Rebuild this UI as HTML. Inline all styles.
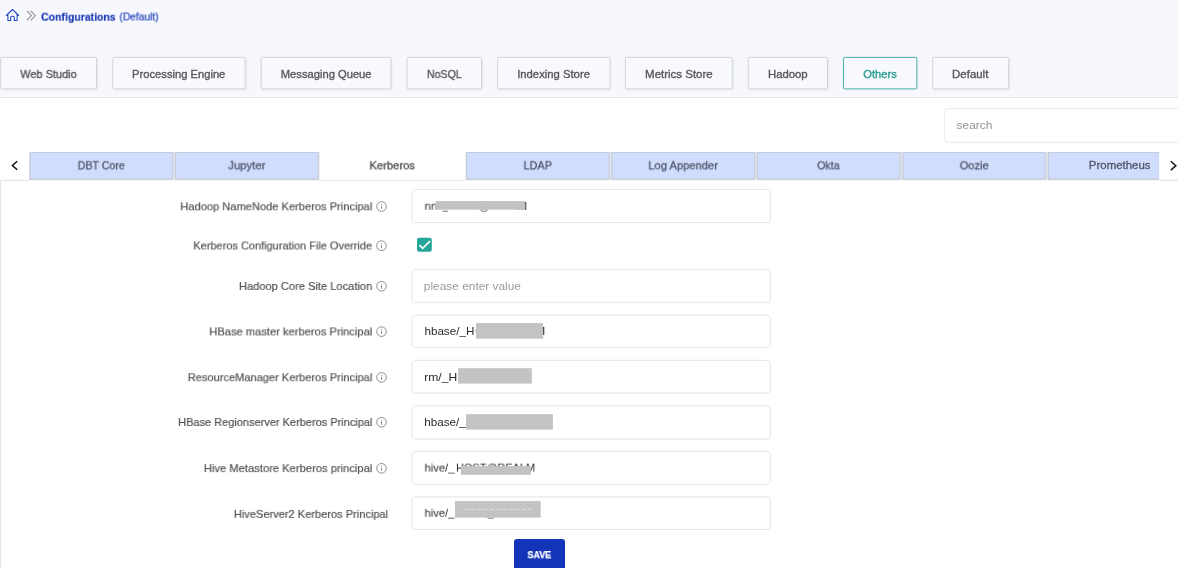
<!DOCTYPE html>
<html><head><meta charset="utf-8"><style>
*{box-sizing:border-box;margin:0;padding:0}
html,body{width:1178px;height:568px;overflow:hidden;background:#fff;font-family:"Liberation Sans",sans-serif;}
body{position:relative}
.t{position:absolute;line-height:20px;white-space:nowrap;transform-origin:0 0;z-index:2;will-change:transform}
.t.z{z-index:6}
.hdr{position:absolute;left:0;top:0;width:1178px;height:97px;background:#f6f8fe}
.sh{position:absolute;top:57px;height:32px;box-shadow:1px 1px 2px rgba(0,0,0,.07)}
.bg,.fg{position:absolute;left:0;top:0}
.bg{z-index:1}.fg{z-index:4}
.mask{position:absolute;background:#c1c1c1;z-index:3}
.save{position:absolute;left:514px;top:539px;width:51px;height:40px;background:#1434b8;border-radius:3px;z-index:5}
</style></head><body>
<div class="hdr"></div>
<div class="sh" style="left:0.6px;width:96.4px"></div>
<div class="sh" style="left:112.8px;width:132.8px"></div>
<div class="sh" style="left:261.2px;width:130.2px"></div>
<div class="sh" style="left:407.1px;width:74.9px"></div>
<div class="sh" style="left:497.6px;width:112.8px"></div>
<div class="sh" style="left:625.4px;width:107.3px"></div>
<div class="sh" style="left:748.3px;width:79.7px"></div>
<div class="sh" style="left:932.7px;width:76.4px"></div>
<svg class="bg" width="1178" height="568" viewBox="0 0 1178 568"><rect x="0" y="97" width="1178" height="1.1" fill="#e3e5eb"/><rect x="0.6" y="57.4" width="95.9" height="31.5" rx="1" fill="#f7f9fe" stroke="#d3d4d8" stroke-width="1"/><rect x="112.8" y="57.4" width="132.3" height="31.5" rx="1" fill="#f7f9fe" stroke="#d3d4d8" stroke-width="1"/><rect x="261.2" y="57.4" width="129.7" height="31.5" rx="1" fill="#f7f9fe" stroke="#d3d4d8" stroke-width="1"/><rect x="407.1" y="57.4" width="74.4" height="31.5" rx="1" fill="#f7f9fe" stroke="#d3d4d8" stroke-width="1"/><rect x="497.6" y="57.4" width="112.3" height="31.5" rx="1" fill="#f7f9fe" stroke="#d3d4d8" stroke-width="1"/><rect x="625.4" y="57.4" width="106.8" height="31.5" rx="1" fill="#f7f9fe" stroke="#d3d4d8" stroke-width="1"/><rect x="748.3" y="57.4" width="79.2" height="31.5" rx="1" fill="#f7f9fe" stroke="#d3d4d8" stroke-width="1"/><rect x="843.4" y="57.4" width="73.5" height="31.5" rx="1" fill="#f7f9fe" stroke="#45ada1" stroke-width="1"/><rect x="932.7" y="57.4" width="75.9" height="31.5" rx="1" fill="#f7f9fe" stroke="#d3d4d8" stroke-width="1"/><rect x="944.3" y="108.5" width="260" height="33.8" rx="5" fill="#fff" stroke="#e9e9e9" stroke-width="1"/><rect x="29" y="152.3" width="1131" height="27" fill="#e2e3e8"/><rect x="30.0" y="152.5" width="142.8" height="26.6" fill="#d1ddfc" stroke="#c6cbdc" stroke-width="1"/><rect x="29.5" y="178.8" width="143.8" height="0.9" fill="#c2c5d1"/><rect x="175.6" y="152.5" width="142.7" height="26.6" fill="#d1ddfc" stroke="#c6cbdc" stroke-width="1"/><rect x="175.1" y="178.8" width="143.7" height="0.9" fill="#c2c5d1"/><rect x="319.5" y="151.5" width="146.0" height="29" fill="#fff"/><rect x="466.5" y="152.5" width="142.7" height="26.6" fill="#d1ddfc" stroke="#c6cbdc" stroke-width="1"/><rect x="466" y="178.8" width="143.7" height="0.9" fill="#c2c5d1"/><rect x="611.9" y="152.5" width="142.5" height="26.6" fill="#d1ddfc" stroke="#c6cbdc" stroke-width="1"/><rect x="611.4" y="178.8" width="143.5" height="0.9" fill="#c2c5d1"/><rect x="757.0" y="152.5" width="142.9" height="26.6" fill="#d1ddfc" stroke="#c6cbdc" stroke-width="1"/><rect x="756.5" y="178.8" width="143.9" height="0.9" fill="#c2c5d1"/><rect x="902.9" y="152.5" width="142.4" height="26.6" fill="#d1ddfc" stroke="#c6cbdc" stroke-width="1"/><rect x="902.4" y="178.8" width="143.4" height="0.9" fill="#c2c5d1"/><rect x="1048.4" y="152.5" width="146.1" height="26.6" fill="#d1ddfc" stroke="#c6cbdc" stroke-width="1"/><rect x="1047.9" y="178.8" width="147.1" height="0.9" fill="#c2c5d1"/><rect x="1159.2" y="150" width="20" height="30.5" fill="#fff"/><rect x="0.3" y="179.7" width="29.2" height="1.2" fill="#e6e6e6"/><rect x="29.5" y="179.9" width="1130" height="1.1" fill="#f4f4f4"/><rect x="1159.2" y="179.7" width="20" height="1.2" fill="#e6e6e6"/><rect x="319.5" y="179.8" width="146" height="1.1" fill="#e9e9e9"/><rect x="0" y="180.5" width="1.1" height="400" fill="#e6e6e6"/><rect x="412.1" y="189.5" width="358.3" height="33.0" rx="4" fill="#fff" stroke="#e9e9e9" stroke-width="1.2"/><rect x="412.1" y="269.4" width="358.3" height="33.0" rx="4" fill="#fff" stroke="#e9e9e9" stroke-width="1.2"/><rect x="412.1" y="315.2" width="358.3" height="32.5" rx="4" fill="#fff" stroke="#e9e9e9" stroke-width="1.2"/><rect x="412.1" y="360.4" width="358.3" height="32.8" rx="4" fill="#fff" stroke="#e9e9e9" stroke-width="1.2"/><rect x="412.1" y="405.8" width="358.3" height="33.3" rx="4" fill="#fff" stroke="#e9e9e9" stroke-width="1.2"/><rect x="412.1" y="451.3" width="358.3" height="33.0" rx="4" fill="#fff" stroke="#e9e9e9" stroke-width="1.2"/><rect x="412.1" y="496.8" width="358.3" height="32.7" rx="4" fill="#fff" stroke="#e9e9e9" stroke-width="1.2"/><rect x="417" y="237.7" width="14.8" height="14" rx="2" fill="#26a69a"/><path d="M419.4 245.2 L422.7 248.4 L429.9 241.1" fill="none" stroke="#fff" stroke-width="1.7"/></svg>
<svg class="fg" width="1178" height="568" viewBox="0 0 1178 568"><path d="M6.3 15.5 L12.5 9.5 L18.7 15.5 M7.9 14.2 V20.5 H10.7 V17.2 Q10.7 16.2 11.7 16.2 H13.3 Q14.3 16.2 14.3 17.2 V20.5 H17.1 V14.2" fill="none" stroke="#2647c4" stroke-width="1.05" stroke-linejoin="round" stroke-linecap="round"/><path d="M26.9 10.9 L31.4 15.6 L26.9 20.3 M30.6 10.9 L35.4 15.6 L30.6 20.3" fill="none" stroke="#8f8f8f" stroke-width="1.05"/><path d="M17.2 161.2 L12.4 165.5 L17.2 169.8" fill="none" stroke="#111" stroke-width="1.5"/><path d="M1170.8 161.3 L1175.8 165.7 L1170.8 170.1" fill="none" stroke="#111" stroke-width="1.5"/><circle cx="381.5" cy="206.5" r="4.8" fill="none" stroke="#808080" stroke-width="0.9"/><path d="M381.5 205.9 V209.0 M381.5 204.0 V204.9" stroke="#808080" stroke-width="0.9"/><circle cx="381.5" cy="245.7" r="4.8" fill="none" stroke="#808080" stroke-width="0.9"/><path d="M381.5 245.1 V248.2 M381.5 243.2 V244.1" stroke="#808080" stroke-width="0.9"/><circle cx="381.5" cy="286.2" r="4.8" fill="none" stroke="#808080" stroke-width="0.9"/><path d="M381.5 285.59999999999997 V288.7 M381.5 283.7 V284.59999999999997" stroke="#808080" stroke-width="0.9"/><circle cx="381.5" cy="331.6" r="4.8" fill="none" stroke="#808080" stroke-width="0.9"/><path d="M381.5 331.0 V334.1 M381.5 329.1 V330.0" stroke="#808080" stroke-width="0.9"/><circle cx="381.5" cy="377.4" r="4.8" fill="none" stroke="#808080" stroke-width="0.9"/><path d="M381.5 376.79999999999995 V379.9 M381.5 374.9 V375.79999999999995" stroke="#808080" stroke-width="0.9"/><circle cx="381.5" cy="422.2" r="4.8" fill="none" stroke="#808080" stroke-width="0.9"/><path d="M381.5 421.59999999999997 V424.7 M381.5 419.7 V420.59999999999997" stroke="#808080" stroke-width="0.9"/><circle cx="381.5" cy="468.3" r="4.8" fill="none" stroke="#808080" stroke-width="0.9"/><path d="M381.5 467.7 V470.8 M381.5 465.8 V466.7" stroke="#808080" stroke-width="0.9"/><path d="M463.7 509.3 H532" stroke="#dedede" stroke-width="1" stroke-dasharray="4.6 1.8"/></svg>
<svg class="bg" style="z-index:3" width="1178" height="568" viewBox="0 0 1178 568"><rect x="435.6" y="201.1" width="89.6" height="8.6" fill="#c3c3c3"/><rect x="476" y="323.1" width="67.0" height="15.6" fill="#c3c3c3"/><rect x="458.1" y="368.2" width="73.7" height="15.4" fill="#c3c3c3"/><rect x="466.1" y="414.2" width="86.8" height="15.4" fill="#c3c3c3"/><rect x="461" y="466.1" width="69.8" height="8.7" fill="#c3c3c3"/><rect x="455" y="501.1" width="85.7" height="16.5" fill="#c3c3c3"/></svg>
<div class="save"></div>
<span class="t" style="left:41px;top:6px;font-size:11.5px;font-weight:bold;color:#1636b2;transform:translate(0.08px,0.70px) scale(0.9123,1);-webkit-text-stroke:0.15px #1636b2">Configurations</span>
<span class="t" style="left:119px;top:7px;font-size:10.3px;font-weight:normal;color:#2040b8;transform:translate(0.44px,0.40px) scale(0.9935,1);-webkit-text-stroke:0.2px #2040b8">(Default)</span>
<span class="t" style="left:20px;top:64px;font-size:11px;font-weight:normal;color:#585858;transform:translate(0.27px,0.00px) scale(0.9973,1);-webkit-text-stroke:0.35px #585858">Web Studio</span>
<span class="t" style="left:132px;top:64px;font-size:11px;font-weight:normal;color:#585858;transform:translate(0.06px,0.00px) scale(1.0170,1);-webkit-text-stroke:0.35px #585858">Processing Engine</span>
<span class="t" style="left:280px;top:64px;font-size:11px;font-weight:normal;color:#585858;transform:translate(0.76px,0.00px) scale(1.0169,1);-webkit-text-stroke:0.35px #585858">Messaging Queue</span>
<span class="t" style="left:426px;top:64px;font-size:11px;font-weight:normal;color:#585858;transform:translate(0.96px,0.00px) scale(0.9596,1);-webkit-text-stroke:0.35px #585858">NoSQL</span>
<span class="t" style="left:517px;top:64px;font-size:11px;font-weight:normal;color:#585858;transform:translate(0.18px,0.00px) scale(1.0253,1);-webkit-text-stroke:0.35px #585858">Indexing Store</span>
<span class="t" style="left:645px;top:64px;font-size:11px;font-weight:normal;color:#585858;transform:translate(0.08px,0.00px) scale(1.0433,1);-webkit-text-stroke:0.35px #585858">Metrics Store</span>
<span class="t" style="left:767px;top:64px;font-size:11px;font-weight:normal;color:#585858;transform:translate(1.00px,0.00px) scale(1.0290,1);-webkit-text-stroke:0.35px #585858">Hadoop</span>
<span class="t" style="left:952px;top:64px;font-size:11px;font-weight:normal;color:#585858;transform:translate(0.06px,0.00px) scale(1.0411,1);-webkit-text-stroke:0.35px #585858">Default</span>
<span class="t" style="left:863px;top:64px;font-size:11px;font-weight:normal;color:#2a9d8f;transform:translate(0.34px,0.00px) scale(1.0133,1);-webkit-text-stroke:0.35px #2a9d8f">Others</span>
<span class="t" style="left:77px;top:155px;font-size:11.4px;font-weight:normal;color:#51566a;transform:translate(0.73px,0.30px) scale(0.9340,1);-webkit-text-stroke:0.3px #51566a">DBT Core</span>
<span class="t" style="left:228px;top:155px;font-size:11.4px;font-weight:normal;color:#51566a;transform:translate(0.30px,0.30px) scale(0.9954,1);-webkit-text-stroke:0.3px #51566a">Jupyter</span>
<span class="t" style="left:369px;top:155px;font-size:11.4px;font-weight:normal;color:#4a4a4a;transform:translate(0.51px,0.30px) scale(0.9812,1);-webkit-text-stroke:0.3px #4a4a4a">Kerberos</span>
<span class="t" style="left:523px;top:155px;font-size:11.4px;font-weight:normal;color:#51566a;transform:translate(0.59px,0.30px) scale(0.9524,1);-webkit-text-stroke:0.3px #51566a">LDAP</span>
<span class="t" style="left:648px;top:155px;font-size:11.4px;font-weight:normal;color:#51566a;transform:translate(0.35px,0.30px) scale(0.9798,1);-webkit-text-stroke:0.3px #51566a">Log Appender</span>
<span class="t" style="left:817px;top:155px;font-size:11.4px;font-weight:normal;color:#51566a;transform:translate(0.18px,0.30px) scale(0.9316,1);-webkit-text-stroke:0.3px #51566a">Okta</span>
<span class="t" style="left:959px;top:155px;font-size:11.4px;font-weight:normal;color:#51566a;transform:translate(0.76px,0.30px) scale(0.9684,1);-webkit-text-stroke:0.3px #51566a">Oozie</span>
<span class="t" style="left:1088px;top:155px;font-size:11.4px;font-weight:normal;color:#51566a;transform:translate(0.81px,0.30px) scale(1.0058,1);-webkit-text-stroke:0.3px #51566a">Prometheus</span>
<span class="t" style="left:956px;top:114px;font-size:11.5px;font-weight:normal;color:#929292;transform:translate(0.57px,0.80px) scale(1.0379,1);">search</span>
<span class="t" style="left:180px;top:196px;font-size:11.4px;font-weight:normal;color:#525252;transform:translate(0.33px,0.30px) scale(0.9746,1);-webkit-text-stroke:0.2px #525252">Hadoop NameNode Kerberos Principal</span>
<span class="t" style="left:193px;top:235px;font-size:11.4px;font-weight:normal;color:#525252;transform:translate(0.35px,0.50px) scale(0.9632,1);-webkit-text-stroke:0.2px #525252">Kerberos Configuration File Override</span>
<span class="t" style="left:238px;top:276px;font-size:11.4px;font-weight:normal;color:#525252;transform:translate(0.94px,0.00px) scale(0.9742,1);-webkit-text-stroke:0.2px #525252">Hadoop Core Site Location</span>
<span class="t" style="left:209px;top:321px;font-size:11.4px;font-weight:normal;color:#525252;transform:translate(0.30px,0.40px) scale(0.9786,1);-webkit-text-stroke:0.2px #525252">HBase master kerberos Principal</span>
<span class="t" style="left:187px;top:367px;font-size:11.4px;font-weight:normal;color:#525252;transform:translate(0.78px,0.20px) scale(0.9711,1);-webkit-text-stroke:0.2px #525252">ResourceManager Kerberos Principal</span>
<span class="t" style="left:178px;top:412px;font-size:11.4px;font-weight:normal;color:#525252;transform:translate(0.14px,0.00px) scale(0.9648,1);-webkit-text-stroke:0.2px #525252">HBase Regionserver Kerberos Principal</span>
<span class="t" style="left:203px;top:458px;font-size:11.4px;font-weight:normal;color:#525252;transform:translate(0.83px,0.10px) scale(0.9821,1);-webkit-text-stroke:0.2px #525252">Hive Metastore Kerberos principal</span>
<span class="t" style="left:233px;top:503px;font-size:11.4px;font-weight:normal;color:#525252;transform:translate(0.84px,0.90px) scale(0.9709,1);-webkit-text-stroke:0.2px #525252">HiveServer2 Kerberos Principal</span>
<span class="t" style="left:424px;top:195px;font-size:11.5px;font-weight:normal;color:#2a2a2a;transform:translate(0.53px,0.70px) scale(0.9981,1);">nn</span>
<span class="t" style="left:442px;top:195px;font-size:11.5px;font-weight:normal;color:#2a2a2a;transform:translate(0.71px,0.70px) scale(0.7833,1);">_</span>
<span class="t" style="left:478px;top:195px;font-size:11.5px;font-weight:normal;color:#2a2a2a;transform:translate(0.46px,0.70px) scale(0.9830,1);">@</span>
<span class="t" style="left:516px;top:195px;font-size:11.5px;font-weight:normal;color:#2a2a2a;transform:translate(0.66px,0.70px) scale(1.1007,1);">M</span>
<span class="t" style="left:423px;top:275px;font-size:11.5px;font-weight:normal;color:#9a9a9a;transform:translate(0.81px,0.70px) scale(1.0340,1);">please enter value</span>
<span class="t" style="left:424px;top:321px;font-size:11.5px;font-weight:normal;color:#2a2a2a;transform:translate(0.42px,0.00px) scale(1.0137,1);">hbase/_H</span>
<span class="t" style="left:475px;top:321px;font-size:11.5px;font-weight:normal;color:#2a2a2a;transform:translate(0.40px,0.00px) scale(0.8524,1);">O</span>
<span class="t" style="left:534px;top:321px;font-size:11.5px;font-weight:normal;color:#2a2a2a;transform:translate(0.66px,0.00px) scale(1.1007,1);">M</span>
<span class="t" style="left:424px;top:367px;font-size:11.5px;font-weight:normal;color:#2a2a2a;transform:translate(0.19px,0.00px) scale(1.0516,1);">rm/_H</span>
<span class="t" style="left:424px;top:412px;font-size:11.5px;font-weight:normal;color:#2a2a2a;transform:translate(0.32px,0.00px) scale(1.0134,1);">hbase/_</span>
<span class="t" style="left:424px;top:457px;font-size:11.5px;font-weight:normal;color:#2a2a2a;transform:translate(0.55px,0.60px) scale(0.9740,1);">hive/_</span>
<span class="t" style="left:456px;top:457px;font-size:11.5px;font-weight:normal;color:#2a2a2a;transform:translate(0.09px,0.60px) scale(0.9482,1);">HOST@REALM</span>
<span class="t" style="left:424px;top:502px;font-size:11.5px;font-weight:normal;color:#2a2a2a;transform:translate(0.55px,0.70px) scale(0.9740,1);">hive/_</span>
<span class="t" style="left:485px;top:502px;font-size:11.5px;font-weight:normal;color:#2a2a2a;transform:translate(0.16px,0.70px) scale(0.9830,1);">@</span>
<span class="t z" style="left:527px;top:546px;font-size:10px;font-weight:bold;color:#fff;transform:translate(0.46px,0.50px) scale(0.8949,0.9);-webkit-text-stroke:0.25px #fff">SAVE</span>
</body></html>
